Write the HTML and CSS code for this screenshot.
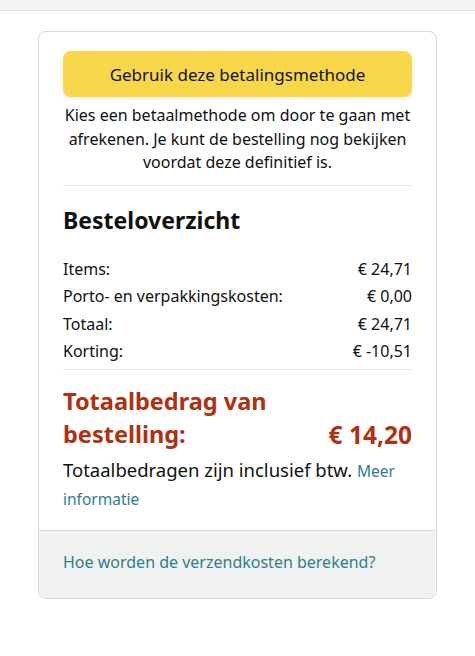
FILE: index.html
```html
<!DOCTYPE html>
<html lang="nl">
<head>
    <meta charset="UTF-8">
    <meta name="viewport" content="width=device-width, initial-scale=1.0">
    <title>Besteloverzicht</title>
    <link rel="stylesheet" href="styles.css">
</head>
<body>
    <div class="topbar"></div>
    <main>
        <section class="box">
            <div class="box-inner">
                <button class="btn-pay">Gebruik deze betalingsmethode</button>
                <p class="hint">Kies een betaalmethode om door te gaan met afrekenen. Je kunt de bestelling nog bekijken voordat deze definitief is.</p>

                <h2>Besteloverzicht</h2>
                <div class="rows">
                    <div class="row"><span>Items:</span><span>€ 24,71</span></div>
                    <div class="row"><span>Porto- en verpakkingskosten:</span><span>€ 0,00</span></div>
                    <div class="row"><span>Totaal:</span><span>€ 24,71</span></div>
                    <div class="row"><span>Korting:</span><span>€ -10,51</span></div>
                </div>

                <div class="grand">
                    <span class="grand-label">Totaalbedrag van bestelling:</span>
                    <span class="grand-amount">€ 14,20</span>
                </div>
                <p class="vat">Totaalbedragen zijn inclusief btw. <a href="#">Meer informatie</a></p>
            </div>
            <div class="box-footer">
                <a href="#">Hoe worden de verzendkosten berekend?</a>
            </div>
        </section>
    </main>
</body>
</html>
```

FILE: styles.css
```css
body {
    font-family: "Noto Sans", Arial, sans-serif;
    margin: 0;
    padding: 0;
    background-color: white;
    color: #0f1111;
}

.topbar {
    height: 10px;
    background-color: #f3f3f3;
    border-bottom: 1px solid #dddddd;
}

main {
    padding: 20px 0;
}

.box {
    width: 399px;
    box-sizing: border-box;
    margin: 0 auto;
    border: 1px solid #d5d9d9;
    border-radius: 8px;
    overflow: hidden;
}

.box-inner {
    padding: 19px 24px 18px;
}

.btn-pay {
    display: block;
    width: 100%;
    height: 46px;
    background-color: #f8d84a;
    border: none;
    border-radius: 8px;
    box-shadow: 0 2px 5px rgba(213, 217, 217, 0.5);
    font-family: inherit;
    font-size: 17px;
    color: #0f1111;
    cursor: pointer;
}

.hint {
    margin: 7px 0 0;
    padding-bottom: 10px;
    border-bottom: 1px solid #e3e6e6;
    text-align: center;
    font-size: 16px;
    line-height: 23.5px;
}

h2 {
    margin: 18px 0 20px;
    font-size: 23px;
    line-height: 32px;
}

.rows {
    border-bottom: 1px solid #e3e6e6;
    padding-bottom: 3px;
}

.row {
    display: flex;
    justify-content: space-between;
    font-size: 16px;
    line-height: 27.5px;
}

.grand {
    display: flex;
    justify-content: space-between;
    align-items: flex-end;
    margin-top: 15px;
    color: #b0300f;
    font-weight: bold;
    font-size: 23.5px;
    line-height: 33px;
}

.grand-label {
    width: 230px;
}

.grand-amount {
    font-size: 24.5px;
}

.vat {
    margin: 5px 0 0;
    font-size: 18.5px;
    line-height: 28px;
}

a {
    color: #2f7d8f;
    text-decoration: none;
}

.vat a {
    font-size: 15.5px;
    line-height: 1;
}

.box-footer {
    background-color: #f0f2f2;
    border-top: 1px solid #d5d9d9;
    padding: 20px 24px 25px;
    font-size: 16px;
    line-height: 22px;
}
```
